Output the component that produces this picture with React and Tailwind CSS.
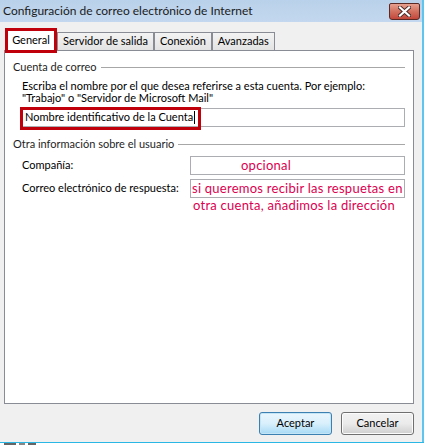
import React from 'react';

const font = "font-['Segoe_UI','Lato','Noto_Sans',sans-serif]";

function Tab({ label, active }) {
  if (active) {
    return (
      <div className="relative z-10 -mb-[3px] flex h-[25px] w-[52px] items-center justify-center border-[3px] border-[#c0000b] bg-white text-[11px] text-black">
        {label}
      </div>
    );
  }
  return (
    <div className="flex h-[18px] items-center border border-b-0 border-[#898c95] bg-gradient-to-b from-[#f3f3f3] to-[#e3e3e3] px-[5px] text-[11px] text-black">
      {label}
    </div>
  );
}

function Legend({ children }) {
  return (
    <div className="flex items-center gap-[4px] text-[11px] leading-[14px] text-[#1e1e1e]">
      <span>{children}</span>
      <div className="h-px flex-1 bg-[#a7a7a7]" />
    </div>
  );
}

function CloseButton() {
  return (
    <div className="flex h-[17px] w-[31px] items-center justify-center rounded-b-[3px] rounded-t-[2px] border border-[#5b2a25] bg-gradient-to-b from-[#e7a08f] via-[#d2705f] to-[#c2463a]">
      <svg width="13" height="11" viewBox="0 0 13 11">
        <path d="M2 1.5 L11 9.5 M11 1.5 L2 9.5" stroke="#4a2a28" strokeWidth="4" strokeLinecap="square" />
        <path d="M2 1.5 L11 9.5 M11 1.5 L2 9.5" stroke="#ffffff" strokeWidth="2.2" strokeLinecap="square" />
      </svg>
    </div>
  );
}

export default function App() {
  return (
    <div className={`flex h-[445px] w-[424px] flex-col overflow-hidden bg-white ${font}`}>
      <div className="flex h-[442px]">
        <div className="flex flex-1 flex-col bg-[#f0f0f0]">
          {/* title bar */}
          <div className="flex h-[22px] items-start justify-between bg-gradient-to-b from-[#b9d1ea] to-[#c3d8ee] pl-[3px] pr-[2px]">
            <span className="mt-[3px] text-[12px] leading-[16px] text-[#1b1b1b]">Configuración de correo electrónico de Internet</span>
            <div className="mt-[3px]">
              <CloseButton />
            </div>
          </div>

          {/* tabs */}
          <div className="mt-[6px] flex items-end pl-[5px]">
            <Tab label="General" active />
            <Tab label="Servidor de salida" />
            <Tab label="Conexión" />
            <Tab label="Avanzadas" />
          </div>

          {/* panel */}
          <div className="ml-[4px] h-[354px] w-[410px] border border-[#898c95] bg-white px-[8px] pt-[9px]">
            <Legend>Cuenta de correo</Legend>
            <div className="mt-[6px] pl-[9px] text-[11px] leading-[12px] text-black">
              <p>Escriba el nombre por el que desea referirse a esta cuenta. Por ejemplo:</p>
              <p>"Trabajo" o "Servidor de Microsoft Mail"</p>
            </div>
            <div className="relative ml-[9px] mt-[4px] flex h-[19px] items-center border border-[#abadb3] pl-[2px] text-[11px] text-black">
              <div className="absolute -left-[3px] -top-[2px] h-[23px] w-[181px] border-[3px] border-[#c0000b]" />
              <span>Nombre identificativo de la Cuenta</span>
              <span className="ml-px h-[13px] w-px bg-black" />
            </div>

            <div className="mt-[10px]">
              <Legend>Otra información sobre el usuario</Legend>
            </div>

            <div className="mt-[5px] flex flex-col gap-[4px] pl-[9px] text-[11px] text-black">
              <div className="flex items-center">
                <span className="w-[168px] whitespace-nowrap">Compañía:</span>
                <div className="flex h-[19px] flex-1 items-center border border-[#abadb3] pl-[50px] text-[13px] tracking-[0.25px] text-[#dc0050]">
                  opcional
                </div>
              </div>
              <div className="flex items-center">
                <span className="w-[168px] whitespace-nowrap">Correo electrónico de respuesta:</span>
                <div className="flex h-[19px] flex-1 items-center whitespace-nowrap border border-[#abadb3] pl-[1px] text-[13px] tracking-[0.25px] text-[#dc0050]">
                  si queremos recibir las respuetas en
                </div>
              </div>
            </div>
            <p className="pl-[180px] text-[13px] leading-[15px] tracking-[0.25px] text-[#dc0050]">otra cuenta, añadimos la dirección</p>
          </div>

          {/* buttons */}
          <div className="mt-[8px] flex justify-end gap-[9px] pr-[8px]">
            <button className="h-[23px] w-[73px] rounded-[3px] border border-[#3c7fb1] bg-gradient-to-b from-[#eaf6fd] via-[#d9f0fc] to-[#a7d9f5] text-[11px] text-black shadow-[inset_0_0_0_1px_#c4e5f6]">
              Aceptar
            </button>
            <button className="h-[23px] w-[73px] rounded-[3px] border border-[#707070] bg-gradient-to-b from-[#f2f2f2] via-[#ebebeb] to-[#cfcfcf] text-[11px] text-black shadow-[inset_0_0_0_1px_#fcfcfc]">
              Cancelar
            </button>
          </div>
        </div>
        <div className="w-[2px] bg-[#5ec6ee]" />
      </div>
      <div className="h-[1px] bg-[#2ab7e6]" />
      <div className="flex h-[2px] gap-[3px] bg-white pl-[4px]">
        <div className="w-[12px] bg-[#666]" />
        <div className="w-[6px] bg-[#888]" />
        <div className="w-[8px] bg-[#666]" />
      </div>
    </div>
  );
}
